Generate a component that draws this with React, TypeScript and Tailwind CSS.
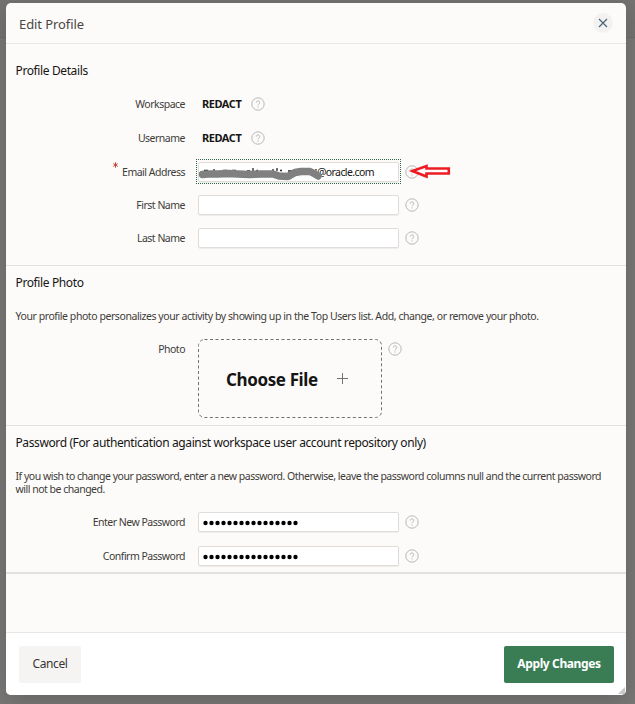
import React from 'react';

function Help({ className = '' }: { className?: string }) {
  return (
    <svg viewBox="0 0 14 14" className={`h-3.5 w-3.5 shrink-0 ${className}`} fill="none" stroke="#b9b7b5">
      <circle cx="7" cy="7" r="6.2" strokeWidth="1" />
      <path d="M5.3 5.6a1.7 1.7 0 1 1 2.6 1.4c-.6.4-.9.7-.9 1.3" strokeWidth="1" />
      <path d="M7 9.4v1.1" strokeWidth="1.1" />
    </svg>
  );
}

function Row({ label, required, children }: { label: string; required?: boolean; children: React.ReactNode }) {
  return (
    <div className="flex h-5 items-center">
      <div className="mr-[13px] flex w-[179px] shrink-0 justify-end text-[#403c38]">
        {required && (
          <svg className="mr-1 h-[6px] w-[5px]" viewBox="0 0 5 6" stroke="#c74634" strokeWidth="1">
            <path d="M2.5 0.3v5.4M0.3 1.6l4.4 2.8M4.7 1.6L0.3 4.4" />
          </svg>
        )}
        <span className="whitespace-nowrap leading-5 tracking-[-0.5px]">{label}</span>
      </div>
      {children}
    </div>
  );
}

function Field({ children }: { children?: React.ReactNode }) {
  return (
    <div className="flex h-5 w-[201px] shrink-0 items-center rounded-[2px] border border-[#dfdcd9] bg-white pl-1 shadow-[0_1px_1px_rgba(0,0,0,0.06)]">
      {children}
    </div>
  );
}

function Dots() {
  return (
    <svg className="mt-[2px] h-[6px] w-[96px]" viewBox="0 0 96 6">
      {Array.from({ length: 16 }, (_, i) => (
        <circle key={i} cx={i * 6 + 2.5} cy="3" r="2.2" />
      ))}
    </svg>
  );
}

export default function App() {
  return (
    <div className="h-[704px] w-[635px] overflow-hidden bg-[linear-gradient(#757371_37px,#6f6d6b_37px,#6f6d6b_38px,#7a7876_38px)] pl-[6px] pt-[3px] font-['Noto_Sans',sans-serif] text-[10.5px] tracking-[-0.43px]">
      <div className="flex h-[692px] w-[620px] flex-col overflow-hidden rounded-[5px] bg-[#fcfbfa] shadow-[0_6px_24px_rgba(0,0,0,0.18)]">
        <header className="flex h-[41px] shrink-0 items-center justify-between border-b border-[#e8e7e6] pl-[13px] pr-[13px]">
          <h1 className="mt-[2px] text-[13px] leading-5 tracking-[-0.08px] text-[#4a4642]">Edit Profile</h1>
          <button className="flex h-5 w-5 items-center justify-center rounded-full bg-[#f3f2f1]">
            <svg viewBox="0 0 10 10" className="h-2.5 w-2.5" stroke="#45617a" strokeWidth="1.1">
              <path d="M1 1l8 8M9 1L1 9" />
            </svg>
          </button>
        </header>

        <section className="h-[222px] shrink-0 border-b border-[#e3e1df] pt-[17px]">
          <h2 className="pl-[9.5px] text-[12px] leading-5 tracking-[-0.38px] text-[#161513]">Profile Details</h2>
          <div className="mt-[13px] flex flex-col gap-[14px]">
            <Row label="Workspace">
              <b className="ml-1 w-[40px] text-[11px] tracking-[-0.45px] text-[#161513]">REDACT</b>
              <Help className="ml-[9px]" />
            </Row>
            <Row label="Username">
              <b className="ml-1 w-[40px] text-[11px] tracking-[-0.45px] text-[#161513]">REDACT</b>
              <Help className="ml-[9px]" />
            </Row>
            <Row label="Email Address" required>
              <div className="relative flex">
                <Field>
                  <span className="ml-[114px] mt-[2px] tracking-[-0.6px] text-[#161513]">@oracle.com</span>
                </Field>
                <div className="absolute -left-[2px] -top-[3px] h-[25px] w-[205px] border border-dotted border-[#2c6b47]" />
                <svg className="absolute left-0 top-0 h-5 w-[130px]" viewBox="0 0 130 20" fill="none">
                  <path d="M6 8.5h4M16 9V7M25 8.5h4M34 8.5h4M49 9h3M55 9V6M58 9l2-1M75 9V7M79 9V6M82 8.5h2M90 9h4M112 9V7M118 8.5V7" stroke="#222" strokeWidth="1.3" />
                  <path d="M4.5 12.5L10 12L20 12L30 11.5L40 12L51 12.5L63 12L75 12L81 14L90 14.5L97 10.5L103 9.5L112 9.5L117 12L120 14" stroke="#808080" strokeWidth="7.5" strokeLinecap="round" strokeLinejoin="round" />
                </svg>
              </div>
              <div className="relative ml-[6px] flex">
                <Help />
                <svg className="absolute -top-[1px] left-[2px] h-[15px] w-11" viewBox="0 0 44 15">
                  <path d="M5.5 7L19.5 2V4.5H41.8V9.5H19.5V12.5Z" fill="#fcfbfa" stroke="#ed1c24" strokeWidth="2.6" />
                </svg>
              </div>
            </Row>
            <div className="-mt-[1px]">
              <Row label="First Name">
                <Field />
                <Help className="ml-[6px]" />
              </Row>
            </div>
            <div className="-mt-[1px]">
              <Row label="Last Name">
                <Field />
                <Help className="ml-[6px]" />
              </Row>
            </div>
          </div>
        </section>

        <section className="h-[160px] shrink-0 border-b border-[#e3e1df] pt-[7px]">
          <h2 className="pl-[9.5px] text-[12px] leading-5 tracking-[-0.38px] text-[#161513]">Profile Photo</h2>
          <p className="mt-[13px] whitespace-nowrap pl-[9.5px] leading-5 text-[#403c38]">
            Your profile photo personalizes your activity by showing up in the Top Users list. Add, change, or remove your photo.
          </p>
          <div className="mt-[13px]">
            <Row label="Photo">
              <div className="relative flex h-[79px] w-[184px] shrink-0 items-center self-start">
                <svg className="absolute left-0 top-0 h-[79px] w-[184px]" viewBox="0 0 184 79" fill="none">
                  <rect x="0.5" y="0.5" width="183" height="78" rx="6" stroke="#74706d" strokeDasharray="3 2.5" />
                </svg>
                <b className="ml-[28px] mt-[3px] w-[92px] whitespace-nowrap text-[17px] tracking-[-0.38px] text-[#161513]">Choose File</b>
                <svg className="ml-[19px] h-[11px] w-[11px]" viewBox="0 0 11 11" stroke="#75716e">
                  <path d="M5.5 0v11M0 5.5h11" />
                </svg>
              </div>
              <Help className="ml-[6px]" />
            </Row>
          </div>
        </section>

        <section className="h-[148px] shrink-0 border-b-2 border-[#e3e1df] pt-[7px]">
          <h2 className="whitespace-nowrap pl-[9.5px] text-[12px] leading-5 tracking-[-0.39px] text-[#161513]">
            Password (For authentication against workspace user account repository only)
          </h2>
          <p className="mt-[17px] whitespace-nowrap pl-[9.5px] leading-[13px] tracking-[-0.49px] text-[#403c38]">
            If you wish to change your password, enter a new password. Otherwise, leave the password columns null and the current password
            <br />
            will not be changed.
          </p>
          <div className="mt-[16px] flex flex-col gap-[14px]">
            <Row label="Enter New Password">
              <Field><Dots /></Field>
              <Help className="ml-[6px]" />
            </Row>
            <Row label="Confirm Password">
              <Field><Dots /></Field>
              <Help className="ml-[6px]" />
            </Row>
          </div>
        </section>

        <div className="flex-1" />

        <footer className="relative flex h-[63px] shrink-0 items-center justify-between border-t border-[#e8e7e6] bg-white pl-[13px] pr-3">
          <button className="h-[37px] w-[62px] rounded-[2px] bg-[#f5f4f2] text-[12px] tracking-[-0.4px] text-[#3a3632]">Cancel</button>
          <button className="h-[37px] w-[110px] whitespace-nowrap rounded-[2px] bg-[#3a7d55] text-[12px] font-bold tracking-[-0.38px] text-white">Apply Changes</button>
          <svg className="absolute bottom-[1px] right-[1px] h-[7px] w-[7px]" viewBox="0 0 7 7" fill="#c9c8c7">
            <path d="M7 0v7H0z" />
          </svg>
        </footer>
      </div>
    </div>
  );
}
